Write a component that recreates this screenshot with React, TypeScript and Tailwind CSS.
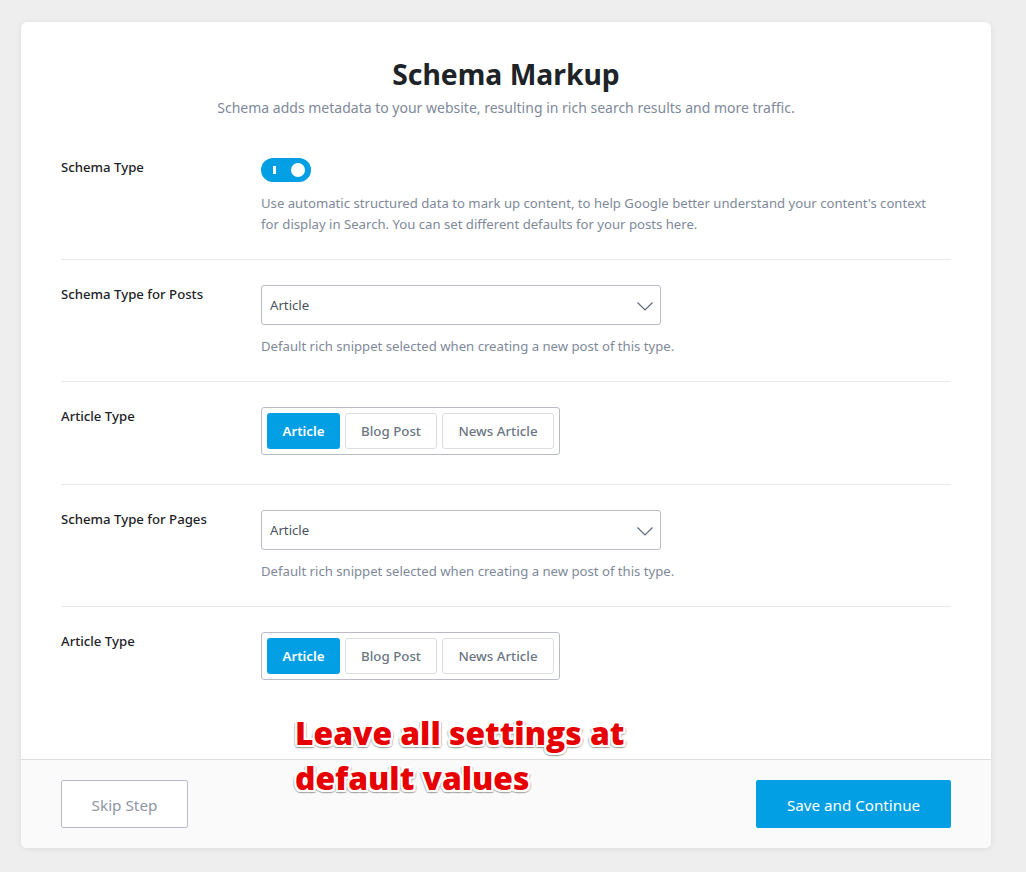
const outline =
  "-2px 0 0 #fff, 2px 0 0 #fff, 0 -2px 0 #fff, 0 2px 0 #fff, -2px -2px 0 #fff, 2px -2px 0 #fff, -2px 2px 0 #fff, 2px 2px 0 #fff, 0 3px 1px #aaa, 2px 3px 1px #aaa, -2px 3px 1px #aaa, 3px 1px 1px #bbb, -3px 1px 1px #bbb";

function Label({ children }: { children: string }) {
  return <div className="-mt-px w-[200px] shrink-0 text-[13.2px] font-medium leading-[20px] text-[#1d2327]">{children}</div>;
}

function Desc({ children }: { children: React.ReactNode }) {
  return <p className="text-[13.15px] leading-[21px] text-[#80899a]">{children}</p>;
}

function SelectBox() {
  return (
    <div className="flex h-[40px] w-[400px] items-center justify-between rounded-[3px] border border-[#b9bcc6] bg-white pl-2 pr-[7px] text-[13.2px] text-[#4a5360]">
      <span className="pt-[2px]">Article</span>
      <svg width="16" height="9" viewBox="0 0 16 9" fill="none" stroke="#5b6b78" strokeWidth="1.2" className="mt-[3px]">
        <path d="M0.5 0.5 L8 8 L15.5 0.5" />
      </svg>
    </div>
  );
}

function ArticleType() {
  return (
    <div className="flex h-[48px] w-fit items-center gap-[5px] rounded-[3px] border border-[#b9bcc6] px-[5px] text-[13.3px] font-medium">
      <div className="flex h-[36px] w-[73px] items-center justify-center rounded-[3px] bg-[#039fe4] pt-[2px] font-semibold text-white">Article</div>
      <div className="flex h-[36px] w-[92px] items-center justify-center rounded-[3px] border border-[#dcdde1] pt-[2px] text-[#6b7683]">Blog Post</div>
      <div className="flex h-[36px] w-[112px] items-center justify-center rounded-[3px] border border-[#dcdde1] pt-[2px] text-[#6b7683]">News Article</div>
    </div>
  );
}

export default function App() {
  return (
    <div className="h-[872px] overflow-hidden bg-[#eeeeee] pl-[21px] pr-[35px] pt-[22px] font-['Noto_Sans','Open_Sans',sans-serif]">
      <div className="relative h-[826px] w-[970px] overflow-hidden rounded-[6px] bg-white shadow-[0_1px_6px_rgba(0,0,0,0.08)]">
        <div className="h-[737px] px-[40px]">
          <h1 className="pt-[30px] text-center text-[28.3px] font-bold leading-[44px] text-[#1d2327]">Schema Markup</h1>
          <p className="pt-[2px] text-center text-[14px] leading-[20px] text-[#80899a]">
            Schema adds metadata to your website, resulting in rich search results and more traffic.
          </p>

          <div className="mt-[40px] flex h-[102px] border-b border-[#e9e9ea]">
            <Label>Schema Type</Label>
            <div>
              <div className="flex h-[24px] w-[50px] items-center justify-between rounded-full bg-[#039fe4] pl-[12px] pr-[6px]">
                <span className="h-[8px] w-[3px] bg-white" />
                <span className="h-[14px] w-[14px] rounded-full bg-white" />
              </div>
              <div className="mt-[11px]">
                <Desc>
                  Use automatic structured data to mark up content, to help Google better understand your content's context
                  <br />
                  for display in Search. You can set different defaults for your posts here.
                </Desc>
              </div>
            </div>
          </div>

          <div className="flex h-[122px] border-b border-[#e9e9ea] pt-[25px]">
            <Label>Schema Type for Posts</Label>
            <div>
              <SelectBox />
              <div className="mt-[11px]">
                <Desc>Default rich snippet selected when creating a new post of this type.</Desc>
              </div>
            </div>
          </div>

          <div className="flex h-[103px] border-b border-[#e9e9ea] pt-[25px]">
            <Label>Article Type</Label>
            <ArticleType />
          </div>

          <div className="flex h-[122px] border-b border-[#e9e9ea] pt-[25px]">
            <Label>Schema Type for Pages</Label>
            <div>
              <SelectBox />
              <div className="mt-[11px]">
                <Desc>Default rich snippet selected when creating a new post of this type.</Desc>
              </div>
            </div>
          </div>

          <div className="flex pt-[25px]">
            <Label>Article Type</Label>
            <ArticleType />
          </div>
        </div>

        <div className="flex h-[89px] items-start justify-between border-t border-[#dddddd] bg-[#fafafa] px-[40px] pt-[20px]">
          <div className="flex h-[48px] w-[127px] items-center justify-center rounded-[2px] border border-[#b9bcc6] bg-white pt-[2px] text-[15.3px] text-[#8e96a6]">
            Skip Step
          </div>
          <div className="flex h-[48px] w-[195px] items-center justify-center rounded-[2px] bg-[#039fe4] pt-[2px] text-[15.2px] text-white">
            Save and Continue
          </div>
        </div>

        <div
          className="absolute left-[274px] top-[688px] w-[360px] font-['Open_Sans','Noto_Sans',sans-serif] text-[31.8px] font-extrabold leading-[45px] text-[#e60000]"
          style={{ textShadow: outline }}
        >
          Leave all settings at default values
        </div>
      </div>
    </div>
  );
}
